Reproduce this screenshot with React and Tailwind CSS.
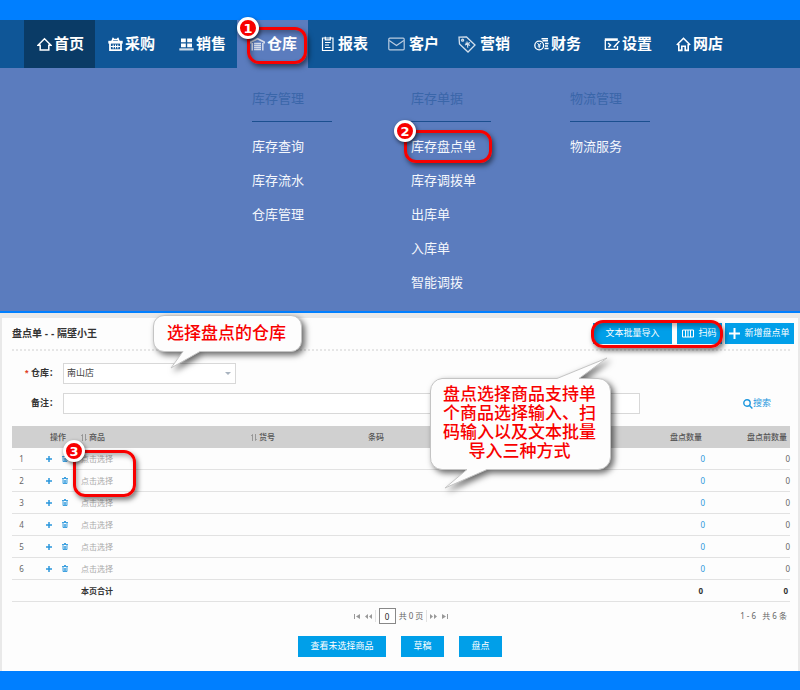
import clsx from "clsx";

const HomeIcon = () => (
  <svg width="15" height="15" viewBox="0 0 15 15" fill="none" stroke="currentColor" strokeWidth="1.5">
    <path d="M1 8.2 7.5 1.8 14 8.2H11.8V13H3.2V8.2Z" />
  </svg>
);

const BasketIcon = () => (
  <svg width="15" height="15" viewBox="0 0 15 15" fill="none" stroke="currentColor">
    <path d="M3.8 5 5.3.8M11.200 5 9.700.8M5 2.500h5" strokeWidth="1.600" />
    <path d="M.3 5.200h14.400" strokeWidth="2.800" />
    <path d="M2 6v7.200h11V6" strokeWidth="1.800" />
    <path d="M5.200 7.500v4M7.500 7.500v4M9.800 7.500v4M3 9.500h9" strokeWidth="1.100" />
  </svg>
);

const SalesIcon = () => (
  <svg width="15" height="15" viewBox="0 0 15 15" fill="currentColor">
    <path d="M2 1.500h4.800v3.800H2zM8.200 1.500H13v3.800H8.200zM2 6.500h4.800v3.800H2zM8.200 6.500H13v3.800H8.200z" />
    <path d="M.3 11.300h14.400v2.200H.3z" opacity=".8" />
  </svg>
);

const WarehouseIcon = () => (
  <svg width="15" height="15" viewBox="0 0 15 15" fill="none" stroke="#d5dcea">
    <path d="M.8 6.500V5L7.500 1.800 14.200 5v1.500" strokeWidth="1.800" />
    <path d="M2.200 6v7.500M12.800 6v7.500" strokeWidth="1.500" />
    <path d="M4 6.500h7M4 8.500h7M4 10.500h7M4 12.500h7" strokeWidth="1.300" />
  </svg>
);

const ReportIcon = () => (
  <svg width="15" height="16" viewBox="0 0 15 16" fill="none" stroke="currentColor">
    <path d="M1.500 2h10.500v12.500H1.500z" strokeWidth="1.200" />
    <path d="M4.300.8v3h5v-3" strokeWidth="1.200" />
    <path d="M4 6.500h5.500M4 9h4M4 11.500h5.500" strokeWidth="1.200" />
  </svg>
);

const MailIcon = () => (
  <svg className="mr-0.5" width="17" height="14" viewBox="0 0 17 14" fill="none" stroke="#b9cbe0" strokeWidth="1.2">
    <rect x=".8" y="1.2" width="15.4" height="11.6" rx="1" />
    <path d="M1.2 3.5 8.5 8.6l7.3-5.1" />
  </svg>
);

const TagIcon = () => (
  <svg className="mr-0.5" width="18" height="17" viewBox="0 0 18 17" fill="none" stroke="#d3dfec" strokeWidth="1.3">
    <path d="M1 1.2 8.5 1 17 9l-7 7L1.5 8Z" />
    <circle cx="4.6" cy="4.2" r="1" />
    <path d="m7 9 5-2.5M9 5.5l.8 6.3M7.5 7l4.5 2.5" strokeWidth="1.1" />
  </svg>
);

const FinanceIcon = () => (
  <svg width="15" height="15" viewBox="0 0 15 15" fill="none" stroke="currentColor">
    <circle cx="5.2" cy="8.5" r="4.4" strokeWidth="1.3" />
    <path d="m3.5 6 1.7 2.3L7 6M5.2 8.3v3M3.7 9h3" strokeWidth="1" />
    <path d="M7.5 1.8H14M8.5 3.7H14M11 6.4h3.5M11 9h3M10.5 11.6h4" strokeWidth="1.5" />
  </svg>
);

const SettingIcon = () => (
  <svg width="16" height="15" viewBox="0 0 16 15" fill="none" stroke="currentColor">
    <path d="M.8 2.6h13" strokeWidth="2.6" />
    <path d="M1.3 3v9.4h12.2V9" strokeWidth="1.3" />
    <path d="m15.4 4-5.6 6.3M4 6l2.5 2-2 2.3" strokeWidth="1.5" />
  </svg>
);

const ShopIcon = () => (
  <svg width="15" height="15" viewBox="0 0 15 15" fill="none" stroke="currentColor" strokeWidth="1.6">
    <path d="M.8 8 7.5 1.3 14.2 8" />
    <path d="M2.8 7v6.4h3V9.3h3.4v4.1h3V7" />
  </svg>
);

const navItems = [
  { label: "首页", Icon: HomeIcon, state: "current" },
  { label: "采购", Icon: BasketIcon },
  { label: "销售", Icon: SalesIcon },
  { label: "仓库", Icon: WarehouseIcon, state: "open" },
  { label: "报表", Icon: ReportIcon },
  { label: "客户", Icon: MailIcon },
  { label: "营销", Icon: TagIcon },
  { label: "财务", Icon: FinanceIcon },
  { label: "设置", Icon: SettingIcon },
  { label: "网店", Icon: ShopIcon },
];

const menuColumns = [
  { title: "库存管理", items: ["库存查询", "库存流水", "仓库管理"] },
  { title: "库存单据", items: ["库存盘点单", "库存调拨单", "出库单", "入库单", "智能调拨"] },
  { title: "物流管理", items: ["物流服务"] },
];

const rows = [1, 2, 3, 4, 5, 6];

// Red outline with a numbered badge on its corner
function StepMark({ step, className }) {
  return (
    <span
      className={clsx(
        "absolute z-10 pointer-events-none border-3 border-[#f80000] shadow-[2px_3px_5px_rgba(0,0,0,0.5),inset_2px_3px_5px_rgba(0,0,0,0.3)]",
        className
      )}
    >
      {step && (
        <span className="absolute -left-[13px] -top-[13px] flex size-[22px] items-center justify-center rounded-full border-3 border-white bg-[#f80000] font-['DejaVu_Sans',sans-serif] text-[13px] leading-none font-bold text-white shadow-[1px_2px_4px_rgba(0,0,0,0.6)]">
          {step}
        </span>
      )}
    </span>
  );
}

function Navbar() {
  return (
    <nav className="flex h-12 bg-[#0f5697] pl-6">
      {navItems.map(({ label, Icon, state }) => (
        <div key={label} className="relative">
          <a
            href="#"
            className={clsx(
              "flex h-full w-[71px] items-center justify-end gap-0.5 pr-[11px] text-[15px] font-bold text-white",
              state === "current" && "bg-[#0a3b66]",
              state === "open" && "bg-[#5b7cbe]"
            )}
          >
            <Icon />
            {label}
          </a>
          {state === "open" && (
            <StepMark step="1" className="left-[10px] top-[7px] h-[37px] w-[60px] rounded-xl" />
          )}
        </div>
      ))}
    </nav>
  );
}

function MegaMenu() {
  return (
    <div className="flex bg-[#5b7cbe] pt-5 pb-[11px] pl-[252px] text-[13px]">
      {menuColumns.map((col) => (
        <div key={col.title} className="w-[159px]">
          <h3 className="w-20 border-b border-[#1b4f8f] pb-[11px] leading-[22px] text-[#3a66a9]">
            {col.title}
          </h3>
          <ul className="mt-2 leading-[34px] text-[#f4f7fc]">
            {col.items.map((item) => (
              <li key={item} className="relative">
                <a href="#">{item}</a>
                {item === "库存盘点单" && (
                  <StepMark step="2" className="-left-[7px] top-0 h-[33px] w-[88px] rounded-xl" />
                )}
              </li>
            ))}
          </ul>
        </div>
      ))}
    </div>
  );
}

function BlueButton({ className, children }) {
  return (
    <button
      type="button"
      className={clsx(
        "flex h-[21px] items-center justify-center gap-1 bg-[#009fe9] text-[9px] whitespace-nowrap text-white",
        className
      )}
    >
      {children}
    </button>
  );
}

function CardHeader() {
  return (
    <div className="flex items-center justify-between border-b-2 border-dotted border-[#e6e6e6] pt-[5px] pb-[5px]">
      <h1 className="text-[10px] font-bold text-[#333]">盘点单 - - 隔壁小王</h1>
      <div className="-mr-1 flex gap-[3px]">
        <div className="relative flex gap-[5px]">
          <BlueButton className="w-[79px]">文本批量导入</BlueButton>
          <BlueButton className="w-[45px]">
            <svg width="12" height="9" viewBox="0 0 12 9" fill="none" stroke="currentColor">
              <path d="M.5 1h11v7H.5zM3.5 1v7M6 1v7M8.5 1v7" />
            </svg>
            扫码
          </BlueButton>
          <StepMark className="-left-[2px] -top-[3px] h-[28px] w-[132px] rounded-xl" />
        </div>
        <BlueButton className="w-[69px]">
          <svg width="11" height="11" viewBox="0 0 11 11" stroke="currentColor" strokeWidth="2">
            <path d="M5.5 0v11M0 5.5h11" />
          </svg>
          新增盘点单
        </BlueButton>
      </div>
    </div>
  );
}

function FilterForm() {
  return (
    <form className="flex flex-col gap-[9px] pt-3 text-[9px] text-[#333]" onSubmit={(e) => e.preventDefault()}>
      <div className="flex items-center gap-[5px]">
        <label htmlFor="store" className="w-[46px] text-right font-bold whitespace-nowrap">
          <span className="text-[#e0401f]">*</span> 仓库：
        </label>
        <div className="relative">
          <select
            id="store"
            className="block h-[21px] w-[173px] appearance-none border border-[#d8d8d8] bg-white pl-[3px] text-[9px] text-[#444] outline-none"
          >
            <option>南山店</option>
          </select>
          <svg className="pointer-events-none absolute right-[5px] top-[9px]" width="6" height="3" viewBox="0 0 6 3">
            <path d="M0 0h6L3 3Z" fill="#a9b4c0" />
          </svg>
        </div>
      </div>
      <div className="flex items-center gap-[5px] pr-[19px]">
        <label htmlFor="remark" className="w-[46px] text-right font-bold whitespace-nowrap">
          备注：
        </label>
        <input id="remark" type="text" className="h-[21px] min-w-0 flex-1 border border-[#d8d8d8] bg-white px-1 outline-none" />
        <button type="button" className="ml-[98px] flex items-center text-[#1c97de]">
          <svg width="10" height="10" viewBox="0 0 10 10" fill="none" stroke="currentColor" strokeWidth="1.4">
            <circle cx="4" cy="4" r="3.2" />
            <path d="m6.2 6.2 3.2 3.2" />
          </svg>
          搜索
        </button>
      </div>
    </form>
  );
}

const SortIcon = () => (
  <svg className="mr-0.5 inline" width="6" height="7" viewBox="0 0 6 7" fill="none" stroke="#888" strokeWidth=".8">
    <path d="M1.5 7V.5L.3 2M4.5 0v6.5L5.7 5" />
  </svg>
);

function StockTable() {
  return (
    <table className="mt-3 w-full table-fixed border-separate border-spacing-0 font-['Noto_Sans','Noto_Sans_CJK_SC',sans-serif] text-[8px] leading-3 text-[#666] [&_td]:h-[22px] [&_td]:border-b [&_td]:border-[#e2e2e2] [&_td]:p-0 [&_th]:h-[22px] [&_th]:p-0">
      <thead>
        <tr className="bg-[#d0d0d0] text-left text-[#555]">
          <th className="w-[23px]"></th>
          <th className="w-[46px]">
            <span className="pl-[15px] font-medium">操作</span>
          </th>
          <th className="w-[170px] font-medium"><SortIcon />商品</th>
          <th className="w-[117px] font-medium"><SortIcon />货号</th>
          <th className="font-medium">条码</th>
          <th className="w-[120px] text-right font-medium">
            <span className="pr-[3px]">盘点数量</span>
          </th>
          <th className="w-[85px] text-right font-medium">
            <span className="pr-[3px]">盘点前数量</span>
          </th>
        </tr>
      </thead>
      <tbody>
        {rows.map((row) => (
          <tr key={row}>
            <td className="text-center">
              <span className="pr-1">{row}</span>
            </td>
            <td>
              <div className="flex items-center gap-[10px] pl-[11px] text-[#2b97dc]">
                <button type="button" aria-label="添加">
                  <svg width="6" height="6" viewBox="0 0 6 6" stroke="currentColor" strokeWidth="1.5">
                    <path d="M3 0v6M0 3h6" />
                  </svg>
                </button>
                <button type="button" aria-label="删除">
                  <svg width="6" height="7" viewBox="0 0 6 7" fill="none" stroke="currentColor">
                    <path d="M0 1.5h6M2 .5h2M1 2v4.5h4V2M2.3 3v3M3.7 3v3" strokeWidth=".9" />
                  </svg>
                </button>
              </div>
            </td>
            <td className="relative">
              <a href="#" className="text-[#aaa]">点击选择</a>
              {row === 1 && <StepMark step="3" className="-left-2 top-0.5 h-[47px] w-[63px] rounded-xl" />}
            </td>
            <td></td>
            <td></td>
            <td className="text-right text-[#2b97dc]">0</td>
            <td className="text-right">0</td>
          </tr>
        ))}
        <tr className="font-bold text-[#333]">
          <td></td>
          <td></td>
          <td>本页合计</td>
          <td></td>
          <td></td>
          <td className="text-right">
            <span className="pr-0.5">0</span>
          </td>
          <td className="text-right">
            <span className="pr-0.5">0</span>
          </td>
        </tr>
      </tbody>
    </table>
  );
}

function PagerArrow({ label, d }) {
  return (
    <button type="button" aria-label={label} className="text-[#999]">
      <svg width="7" height="5" viewBox="0 0 7 5" fill="currentColor">
        <path d={d} />
      </svg>
    </button>
  );
}

function Pager() {
  return (
    <div className="grid h-7 grid-cols-[1fr_auto_1fr] items-center font-['Noto_Sans','Noto_Sans_CJK_SC',sans-serif] text-[8px] text-[#666]">
      <div></div>
      <div className="flex items-center gap-[3px]">
        <div className="flex gap-1">
          <PagerArrow label="首页" d="M0 0h1v5H0zM6 0v5L2 2.5z" />
          <PagerArrow label="上一页" d="M3 0v5L0 2.500zM7 0v5L4 2.500z" />
        </div>
        <span className="h-3 w-px bg-[#e2e2e2]"></span>
        <input
          type="text"
          aria-label="页码"
          defaultValue="0"
          className="h-4 w-[17px] border border-[#888] bg-white text-center text-[#222] outline-none"
        />
        <span>共 0 页</span>
        <span className="h-3 w-px bg-[#e2e2e2]"></span>
        <div className="flex gap-1">
          <PagerArrow label="下一页" d="M0 0v5l3-2.500zM4 0v5l3-2.500z" />
          <PagerArrow label="末页" d="M1 0v5l4-2.500zM6 0h1v5H6z" />
        </div>
      </div>
      <p className="justify-self-end pr-[3px] whitespace-pre">1 - 6   共 6 条</p>
    </div>
  );
}

function Callout({ className, width, height, d, children }) {
  return (
    <div className={clsx("absolute z-20 text-center text-[17px] leading-[19px] font-medium text-[#f80000]", className)}>
      <svg
        className="absolute left-0 top-0 -z-10 overflow-visible drop-shadow-[3px_3px_3px_rgba(0,0,0,0.6)]"
        width={width}
        height={height}
        viewBox={`0 0 ${width} ${height}`}
      >
        <path d={d} fill="#fdfdfd" stroke="#c4c4c4" />
      </svg>
      {children}
    </div>
  );
}

export default function App() {
  return (
    <div className="min-h-screen bg-[#007fff] pt-5 pb-[19px] font-['Liberation_Sans','Noto_Sans_CJK_SC',sans-serif]">
      <Navbar />
      <MegaMenu />

      <main className="mt-0.5 bg-[#e9e9e9] px-0.5 pt-[5px]">
        <div className="relative bg-[#fdfdfd] pr-2 pb-3.5 pl-[10px]">
          <CardHeader />
          <FilterForm />
          <StockTable />
          <Pager />
          <div className="flex justify-center gap-[15px] pt-1.5 pr-0.5">
            <BlueButton className="w-[88px]">查看未选择商品</BlueButton>
            <BlueButton className="w-[43px]">草稿</BlueButton>
            <BlueButton className="w-[43px]">盘点</BlueButton>
          </div>

          <Callout
            className="-top-[3px] left-[151px] w-[149px] pt-[9px] pr-0.5"
            width={149}
            height={54}
            d="M11 .5H138a10.500 10.500 0 0 1 10.500 10.500V26a10.500 10.500 0 0 1-10.500 10.500H47L18 53 30 36.500H11A10.500 10.500 0 0 1 .5 26V11A10.500 10.500 0 0 1 11 .5Z"
          >
            选择盘点的仓库
          </Callout>

          <Callout
            className="left-[428px] top-[39px] w-[181px] pt-[28px] pr-[14px] pl-3"
            width={181}
            height={132}
            d="M12 21.500H127L177 1 149 21.500h19a12.500 12.500 0 0 1 12.500 12.500V100a12.500 12.500 0 0 1-12.500 12.500H57L15 131l22-18.500H12A11.500 11.500 0 0 1 .5 100V34A12.500 12.500 0 0 1 12 21.500Z"
          >
            盘点选择商品支持单个商品选择输入、扫码输入以及文本批量导入三种方式
          </Callout>
        </div>
      </main>
    </div>
  );
}
